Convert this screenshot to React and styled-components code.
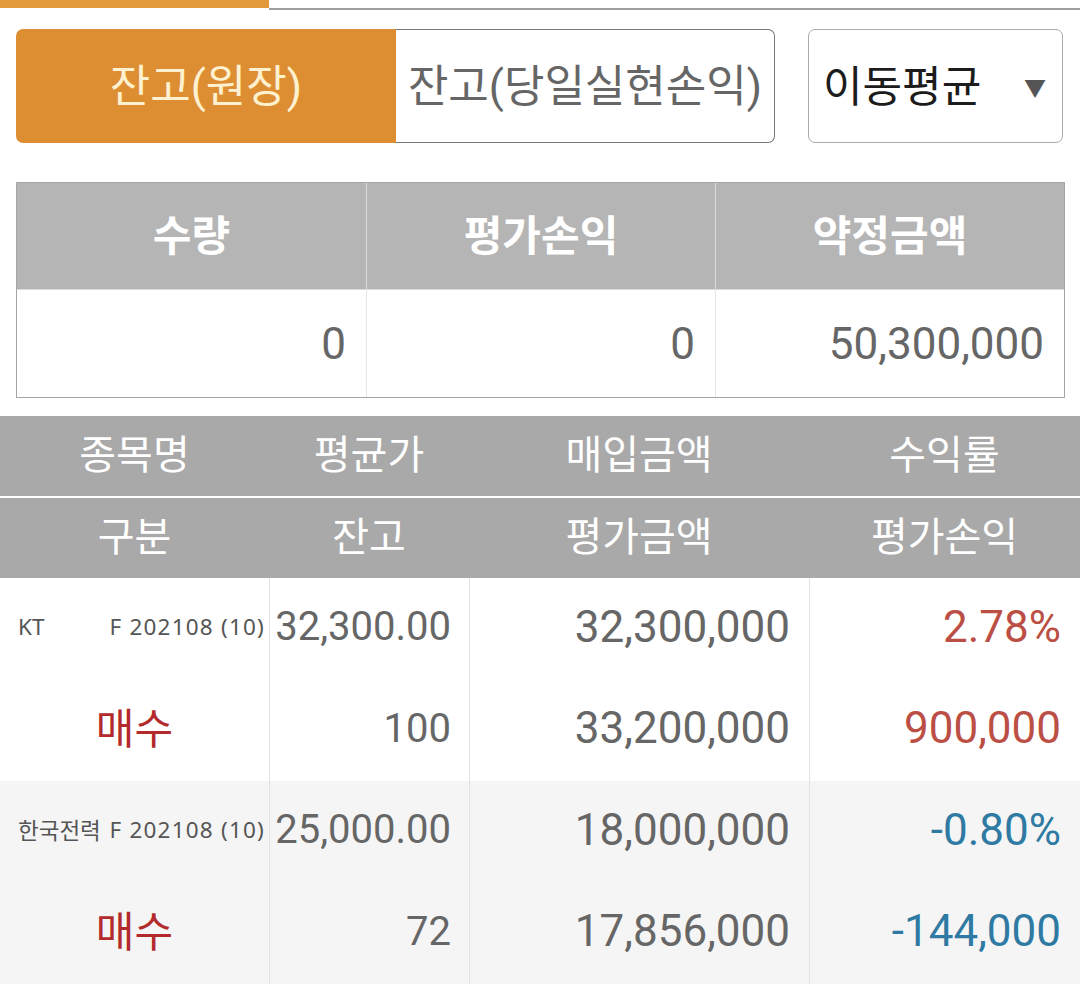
import React from 'react';
import styled, {createGlobalStyle} from 'styled-components';

const GlobalStyle = createGlobalStyle`
  body {
    margin: 0;
    background: #fff;
    font-family: Roboto, "Noto Sans CJK KR", sans-serif;
  }
`;

const summary = [
  {label: '수량', value: '0'},
  {label: '평가손익', value: '0'},
  {label: '약정금액', value: '50,300,000'}
];

const headTop = ['종목명', '평균가', '매입금액', '수익률'];
const headBottom = ['구분', '잔고', '평가금액', '평가손익'];

const holdings = [
  {name: 'KT', code: 'F 202108 (10)', side: '매수', avg: '32,300.00', qty: '100',
    buy: '32,300,000', evalAmt: '33,200,000', rate: '2.78%', pnl: '900,000', up: true},
  {name: '한국전력', code: 'F 202108 (10)', side: '매수', avg: '25,000.00', qty: '72',
    buy: '18,000,000', evalAmt: '17,856,000', rate: '-0.80%', pnl: '-144,000', up: false}
];

export default function App() {
  return (
    <Page>
      <GlobalStyle/>
      <Indicator>
        <IndicatorActive/>
        <IndicatorRest/>
      </Indicator>

      <Controls>
        <Segmented>
          <SegButton active>잔고(원장)</SegButton>
          <SegButton>잔고(당일실현손익)</SegButton>
        </Segmented>
        <Select>
          <span>이동평균</span>
          <Caret>▼</Caret>
        </Select>
      </Controls>

      <Summary>
        {summary.map(s => <SummaryHead key={s.label}>{s.label}</SummaryHead>)}
        {summary.map(s => <SummaryValue key={s.label}>{s.value}</SummaryValue>)}
      </Summary>

      <GridHead>
        <HeadRow>
          {headTop.map(h => <HeadCell key={h}>{h}</HeadCell>)}
        </HeadRow>
        <HeadRow>
          {headBottom.map(h => <HeadCell key={h}>{h}</HeadCell>)}
        </HeadRow>
      </GridHead>

      {holdings.map((h, i) => (
        <Item key={h.name} shaded={i % 2 === 1}>
          <NameCell>
            <span>{h.name}</span>
            <Code>{h.code}</Code>
          </NameCell>
          <NumCell narrow>{h.avg}</NumCell>
          <NumCell>{h.buy}</NumCell>
          <NumCell tone={h.up ? 'up' : 'down'}>{h.rate}</NumCell>
          <SideCell>{h.side}</SideCell>
          <NumCell narrow>{h.qty}</NumCell>
          <NumCell>{h.evalAmt}</NumCell>
          <NumCell tone={h.up ? 'up' : 'down'}>{h.pnl}</NumCell>
        </Item>
      ))}
    </Page>
  );
}

const Page = styled.div`
  width: 1080px;
  min-height: 988px;
  overflow: hidden;
`;

const Indicator = styled.div`
  display: flex;
  height: 10px;
`;

const IndicatorActive = styled.div`
  width: 269px;
  height: 8px;
  background: #e39a3c;
`;

const IndicatorRest = styled.div`
  flex: 1;
  height: 2px;
  margin-top: 8px;
  background: #9e9e9e;
`;

const Controls = styled.div`
  display: flex;
  gap: 33px;
  padding: 19px 17px 0 16px;
`;

const Segmented = styled.div`
  display: flex;
  width: 759px;
  height: 114px;
`;

const SegButton = styled.div`
  display: flex;
  align-items: center;
  justify-content: center;
  box-sizing: border-box;
  width: ${p => (p.active ? '380px' : 'auto')};
  flex: ${p => (p.active ? 'none' : '1')};
  padding-bottom: 6px;
  background: ${p => (p.active ? '#dd8e33' : '#fff')};
  color: ${p => (p.active ? '#fdf1cf' : '#666')};
  border: ${p => (p.active ? 'none' : '1px solid #777')};
  border-left: none;
  border-radius: ${p => (p.active ? '7px 0 0 7px' : '0 7px 7px 0')};
  font-size: 44px;
  white-space: nowrap;
`;

const Select = styled.div`
  flex: 1;
  display: flex;
  align-items: center;
  justify-content: space-between;
  box-sizing: border-box;
  height: 114px;
  padding: 0 16px 6px 14px;
  border: 1px solid #aaa;
  border-radius: 7px;
  color: #1c1c1c;
  font-size: 43px;
`;

const Caret = styled.span`
  color: #555;
  font-size: 22px;
  padding-top: 6px;
`;

const Summary = styled.div`
  display: grid;
  grid-template-columns: repeat(3, 1fr);
  grid-template-rows: 107px 107px;
  margin: 39px 15px 0 16px;
  border: 1px solid #a5a5a5;
`;

const SummaryHead = styled.div`
  display: flex;
  align-items: center;
  justify-content: center;
  padding-bottom: 8px;
  background: #b5b5b5;
  color: #fff;
  font-size: 42px;
  font-weight: 700;
  border-left: 1px solid #dcdcdc;
  border-bottom: 1px solid #dcdcdc;

  &:first-child {
    border-left: none;
  }
`;

const SummaryValue = styled.div`
  display: flex;
  align-items: center;
  justify-content: flex-end;
  padding-right: 20px;
  color: #666;
  font-size: 44px;
  border-left: 1px solid #e6e6e6;

  &:nth-child(4) {
    border-left: none;
  }
`;

const cols = '269px 200px 340px 1fr';

const GridHead = styled.div`
  margin-top: 18px;
  display: flex;
  flex-direction: column;
  gap: 2px;
  background: #fff;
`;

const HeadRow = styled.div`
  display: grid;
  grid-template-columns: ${cols};
  height: 80px;
  background: #a9a9a9;
`;

const HeadCell = styled.div`
  display: flex;
  align-items: center;
  justify-content: center;
  padding-bottom: 8px;
  color: #fff;
  font-size: 40px;
`;

const Item = styled.div`
  display: grid;
  grid-template-columns: ${cols};
  grid-template-rows: 101px 102px;
  background: ${p => (p.shaded ? '#f5f5f5' : '#fff')};

  & > div:not(:nth-child(4n + 1)) {
    border-left: 1px solid #e3e3e3;
  }
`;

const NameCell = styled.div`
  display: flex;
  align-items: center;
  justify-content: space-between;
  padding: 0 4px 4px 18px;
  color: #555;
  font-family: "Noto Sans", "Noto Sans CJK KR", sans-serif;
  font-size: 22.5px;
  white-space: nowrap;
`;

const Code = styled.span`
  letter-spacing: 1.2px;
`;

const SideCell = styled.div`
  display: flex;
  align-items: center;
  justify-content: center;
  padding-bottom: 10px;
  color: #b22a2c;
  font-size: 42px;
`;

const toneColor = {up: '#bb4f45', down: '#2f7aa3'};

const NumCell = styled.div`
  display: flex;
  align-items: center;
  justify-content: flex-end;
  padding: 0 ${p => (p.narrow ? '18px' : '19px')} 4px 0;
  color: ${p => toneColor[p.tone] || '#666'};
  font-size: ${p => (p.narrow ? '40px' : '44px')};
  white-space: nowrap;
`;
